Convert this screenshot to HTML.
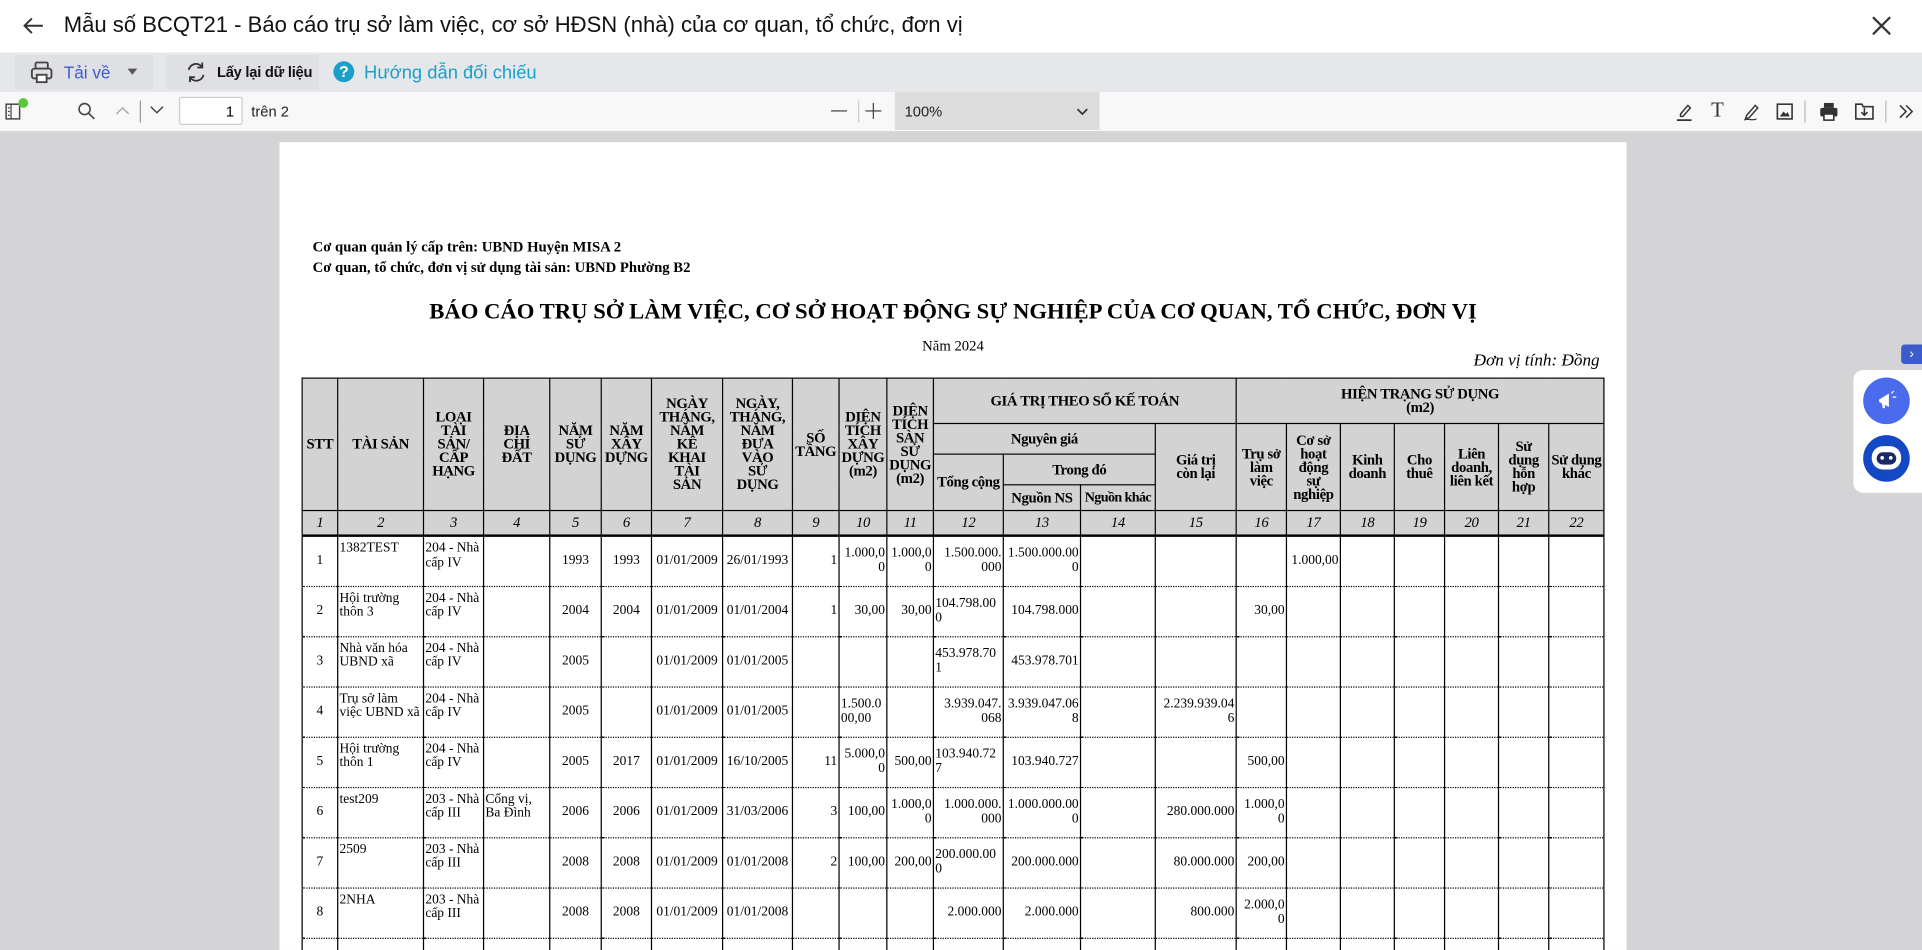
<!DOCTYPE html>
<html><head><meta charset="utf-8">
<style>
html,body{margin:0;padding:0;width:1922px;height:950px;overflow:hidden;background:#fff}
#w{position:absolute;left:0;top:0;width:1568px;height:775px;transform:scale(1.22577);transform-origin:0 0;overflow:hidden;font-family:"Liberation Sans",sans-serif;background:#d4d4d6}
.abs{position:absolute}
#title{left:0;top:0;width:1568px;height:43px;background:#fff}
#tb{left:0;top:43px;width:1568px;height:32px;background:#e6e7ea}
#tb2{left:0;top:75px;width:1568px;height:32px;background:#f8f8f8;border-bottom:1px solid #d0d0d0}
#page{left:228px;top:116px;width:1099px;height:659px;background:#fff;overflow:hidden}
.serif{font-family:"Liberation Serif",serif}
table{border-collapse:collapse;table-layout:fixed;position:absolute;left:18px;top:192px;width:1062px;font-family:"Liberation Serif",serif;font-size:11px}
td{border:1px solid #000;padding:0 1px;line-height:11.5px;overflow:hidden}
thead td{background:#d3d3d3;font-weight:bold;text-align:center;vertical-align:middle;font-size:12px;line-height:11px;letter-spacing:-0.3px}
tr.num td{font-style:italic;font-weight:normal;height:19px;border-bottom:2px solid #000}
tbody td{height:36px;padding-top:4px;border-top:1px dotted #000;border-bottom:1px dotted #000;vertical-align:top;box-sizing:border-box}
tbody tr{height:41px}
tbody td.m{vertical-align:middle;padding-top:0;text-align:center}
tbody td.r{text-align:right;vertical-align:middle;padding-top:0;word-break:break-all}
</style></head><body><div id="w">
<div id="title" class="abs">
 <svg class="abs" style="left:18px;top:13px" width="18" height="16" viewBox="0 0 18 16"><path d="M17 8H2M8 2L2 8l6 6" stroke="#333" stroke-width="1.6" fill="none"/></svg>
 <div class="abs" style="left:52px;top:10px;font-size:18px;color:#111;font-weight:500">Mẫu số BCQT21 - Báo cáo trụ sở làm việc, cơ sở HĐSN (nhà) của cơ quan, tổ chức, đơn vị</div>
 <svg class="abs" style="left:1527px;top:13px" width="16" height="16" viewBox="0 0 16 16"><path d="M1 1L15 15M15 1L1 15" stroke="#333" stroke-width="1.8"/></svg>
</div>
<div id="tb" class="abs">
 <div class="abs" style="left:12px;top:2px;width:113px;height:28px;background:#dfe0e4"></div>
 <svg class="abs" style="left:24px;top:6px" width="20" height="20" viewBox="0 0 20 20"><rect x="5" y="2" width="10" height="5" rx="1" fill="none" stroke="#444" stroke-width="1.5"/><rect x="2" y="7" width="16" height="8" rx="2" fill="none" stroke="#444" stroke-width="1.5"/><rect x="6" y="12" width="8" height="6" fill="#fff" stroke="#444" stroke-width="1.5"/></svg>
 <div class="abs" style="left:52px;top:8px;font-size:14px;color:#3d5ccc">Tải về</div>
 <div class="abs" style="left:104px;top:13px;width:0;height:0;border-left:4px solid transparent;border-right:4px solid transparent;border-top:5px solid #555"></div>
 <div class="abs" style="left:135px;top:2px;width:125px;height:28px;background:#dfe0e4"></div>
 <svg class="abs" style="left:150px;top:7px" width="20" height="18" viewBox="0 0 20 18"><path d="M4 7a6 6 0 0 1 11-2M16 11a6 6 0 0 1-11 2" fill="none" stroke="#333" stroke-width="1.5"/><path d="M15 1v4h-4M5 17v-4h4" fill="none" stroke="#333" stroke-width="1.5"/></svg>
 <div class="abs" style="left:177px;top:9px;font-size:12px;color:#111;font-weight:bold;letter-spacing:-0.2px">Lấy lại dữ liệu</div>
 <div class="abs" style="left:272px;top:7px;width:17px;height:17px;border-radius:50%;background:#1aa0c8;color:#fff;font-size:13px;font-weight:bold;text-align:center;line-height:17px">?</div>
 <div class="abs" style="left:297px;top:8px;font-size:15px;color:#1aa0c8">Hướng dẫn đối chiếu</div>
</div>
<div id="tb2" class="abs">
 <svg class="abs" style="left:4px;top:9px" width="14" height="14" viewBox="0 0 14 14"><rect x="1" y="1" width="11" height="12" fill="none" stroke="#444" stroke-width="1.2"/><path d="M5 1v12M2.5 4h1.5M2.5 7h1.5M2.5 10h1.5" stroke="#444"/></svg>
 <div class="abs" style="left:15px;top:5px;width:8px;height:8px;border-radius:50%;background:#5ac83c"></div>
 <svg class="abs" style="left:63px;top:8px" width="15" height="15" viewBox="0 0 15 15"><circle cx="6" cy="6" r="4.5" fill="none" stroke="#444" stroke-width="1.3"/><path d="M9.5 9.5L14 14" stroke="#444" stroke-width="1.3"/></svg>
 <svg class="abs" style="left:94px;top:10px" width="12" height="10" viewBox="0 0 12 10"><path d="M1 8l5-5 5 5" fill="none" stroke="#aaa" stroke-width="1.2"/></svg>
 <div class="abs" style="left:114px;top:7px;width:1px;height:18px;background:#999"></div>
 <svg class="abs" style="left:122px;top:10px" width="12" height="10" viewBox="0 0 12 10"><path d="M1 2l5 5 5-5" fill="none" stroke="#444" stroke-width="1.2"/></svg>
 <div class="abs" style="left:146px;top:4px;width:52px;height:23px;border:1px solid #ccc;background:#fff;border-radius:2px;font-size:12px;text-align:right;line-height:23px;box-sizing:border-box;padding-right:6px">1</div>
 <div class="abs" style="left:205px;top:9px;font-size:12px;color:#222">trên 2</div>
 <div class="abs" style="left:678px;top:15px;width:13px;height:1.3px;background:#444"></div>
 <div class="abs" style="left:700px;top:7px;width:1px;height:18px;background:#ccc"></div>
 <div class="abs" style="left:706px;top:15px;width:13px;height:1.3px;background:#444"></div>
 <div class="abs" style="left:712px;top:9px;width:1.3px;height:13px;background:#444"></div>
 <div class="abs" style="left:730px;top:0;width:167px;height:31px;background:#dcdcdc"></div>
 <div class="abs" style="left:738px;top:9px;font-size:12px;color:#222">100%</div>
 <svg class="abs" style="left:878px;top:12px" width="10" height="8" viewBox="0 0 10 8"><path d="M1 2l4 4 4-4" fill="none" stroke="#333" stroke-width="1.4"/></svg>
 <svg class="abs" style="left:1366px;top:8px" width="16" height="16" viewBox="0 0 16 16"><path d="M5 10l6-7 2 2-6 7H5z" fill="none" stroke="#333" stroke-width="1.2"/><path d="M2 15h12" stroke="#333" stroke-width="1.5"/></svg>
 <div class="abs serif" style="left:1396px;top:5px;font-size:17px;color:#333">T</div>
 <svg class="abs" style="left:1421px;top:8px" width="16" height="16" viewBox="0 0 16 16"><path d="M4 11l7-8 2 2-7 8-3 1z" fill="none" stroke="#333" stroke-width="1.2"/><path d="M2 15c3-2 5 1 10-1" fill="none" stroke="#333"/></svg>
 <svg class="abs" style="left:1449px;top:9px" width="14" height="14" viewBox="0 0 14 14"><rect x="1" y="1" width="12" height="12" fill="none" stroke="#333" stroke-width="1.3"/><path d="M3 11l3-4 2 2 1.5-1.5L11 11z" fill="#333"/></svg>
 <div class="abs" style="left:1472px;top:7px;width:1px;height:18px;background:#bbb"></div>
 <svg class="abs" style="left:1484px;top:8px" width="16" height="16" viewBox="0 0 16 16"><rect x="4" y="1" width="8" height="4" fill="#333"/><rect x="1" y="5" width="14" height="7" rx="1.5" fill="#333"/><rect x="4" y="10" width="8" height="5" fill="#fff" stroke="#333" stroke-width="1.3"/></svg>
 <svg class="abs" style="left:1513px;top:8px" width="17" height="16" viewBox="0 0 17 16"><path d="M1 2h5l1 2h8v10H1z" fill="none" stroke="#333" stroke-width="1.3"/><path d="M8 5v6M5.5 8.5L8 11l2.5-2.5" fill="none" stroke="#333" stroke-width="1.3"/></svg>
 <div class="abs" style="left:1538px;top:7px;width:1px;height:18px;background:#bbb"></div>
 <svg class="abs" style="left:1548px;top:10px" width="14" height="12" viewBox="0 0 14 12"><path d="M2 1l5 5-5 5M7 1l5 5-5 5" fill="none" stroke="#333" stroke-width="1.2"/></svg>
</div>
<div id="page" class="abs">
 <div class="abs serif" style="left:27px;top:77px;font-size:12px;font-weight:bold;line-height:17px">Cơ quan quản lý cấp trên: UBND Huyện MISA 2<br>Cơ quan, tổ chức, đơn vị sử dụng tài sản: UBND Phường B2</div>
 <div class="abs serif" style="left:0;width:1099px;top:129px;text-align:center;font-size:18.5px;font-weight:bold">BÁO CÁO TRỤ SỞ LÀM VIỆC, CƠ SỞ HOẠT ĐỘNG SỰ NGHIỆP CỦA CƠ QUAN, TỔ CHỨC, ĐƠN VỊ</div>
 <div class="abs serif" style="left:0;width:1099px;top:159px;text-align:center;font-size:12px">Năm 2024</div>
 <div class="abs serif" style="right:22px;top:171px;font-size:14px;font-style:italic">Đơn vị tính: Đồng</div>
 <table>
 <colgroup><col style="width:29px"><col style="width:70px"><col style="width:49px"><col style="width:54px"><col style="width:42px"><col style="width:41px"><col style="width:58px"><col style="width:57px"><col style="width:38px"><col style="width:39px"><col style="width:38px"><col style="width:57px"><col style="width:63px"><col style="width:61px"><col style="width:66px"><col style="width:41px"><col style="width:44px"><col style="width:44px"><col style="width:41px"><col style="width:44px"><col style="width:41px"><col style="width:45px"></colgroup>
 <thead>
 <tr style="height:37px"><td rowspan="4">STT</td><td rowspan="4">TÀI SẢN</td><td rowspan="4">LOẠI<br>TÀI<br>SẢN/<br>CẤP<br>HẠNG</td><td rowspan="4">ĐỊA<br>CHỈ<br>ĐẤT</td><td rowspan="4">NĂM<br>SỬ<br>DỤNG</td><td rowspan="4">NĂM<br>XÂY<br>DỰNG</td><td rowspan="4">NGÀY<br>THÁNG,<br>NĂM<br>KÊ<br>KHAI<br>TÀI<br>SẢN</td><td rowspan="4">NGÀY,<br>THÁNG,<br>NĂM<br>ĐƯA<br>VÀO<br>SỬ<br>DỤNG</td><td rowspan="4">SỐ<br>TẦNG</td><td rowspan="4">DIỆN<br>TÍCH<br>XÂY<br>DỰNG<br>(m2)</td><td rowspan="4">DIỆN<br>TÍCH<br>SÀN<br>SỬ<br>DỤNG<br>(m2)</td><td colspan="4">GIÁ TRỊ THEO SỔ KẾ TOÁN</td><td colspan="7">HIỆN TRẠNG SỬ DỤNG<br>(m2)</td></tr>
 <tr style="height:25px"><td colspan="3">Nguyên giá</td><td rowspan="3">Giá trị<br>còn lại</td><td rowspan="3">Trụ sở<br>làm<br>việc</td><td rowspan="3">Cơ sở<br>hoạt<br>động<br>sự<br>nghiệp</td><td rowspan="3">Kinh<br>doanh</td><td rowspan="3">Cho<br>thuê</td><td rowspan="3">Liên<br>doanh,<br>liên kết</td><td rowspan="3">Sử<br>dụng<br>hỗn<br>hợp</td><td rowspan="3" style="white-space:nowrap">Sử dụng<br>khác</td></tr>
 <tr style="height:25px"><td rowspan="2">Tổng cộng</td><td colspan="2">Trong đó</td></tr>
 <tr style="height:21px"><td>Nguồn NS</td><td style="white-space:nowrap;letter-spacing:-0.5px;font-size:11.5px">Nguồn khác</td></tr>
 <tr class="num"><td>1</td><td>2</td><td>3</td><td>4</td><td>5</td><td>6</td><td>7</td><td>8</td><td>9</td><td>10</td><td>11</td><td>12</td><td>13</td><td>14</td><td>15</td><td>16</td><td>17</td><td>18</td><td>19</td><td>20</td><td>21</td><td>22</td></tr>
 </thead>
 <tbody>
 <tr><td class="m">1</td><td>1382TEST</td><td>204 - Nhà cấp IV</td><td></td><td class="m">1993</td><td class="m">1993</td><td class="m">01/01/2009</td><td class="m">26/01/1993</td><td class="r">1</td><td class="r">1.000,0 0</td><td class="r">1.000,0 0</td><td class="r">1.500.000. 000</td><td class="r">1.500.000.00 0</td><td></td><td></td><td></td><td class="r">1.000,00</td><td></td><td></td><td></td><td></td><td></td></tr>
 <tr><td class="m">2</td><td>Hội trường thôn 3</td><td>204 - Nhà cấp IV</td><td></td><td class="m">2004</td><td class="m">2004</td><td class="m">01/01/2009</td><td class="m">01/01/2004</td><td class="r">1</td><td class="r">30,00</td><td class="r">30,00</td><td class="r" style="text-align:left">104.798.00 0</td><td class="r">104.798.000</td><td></td><td></td><td class="r">30,00</td><td></td><td></td><td></td><td></td><td></td><td></td></tr>
 <tr><td class="m">3</td><td>Nhà văn hóa UBND xã</td><td>204 - Nhà cấp IV</td><td></td><td class="m">2005</td><td></td><td class="m">01/01/2009</td><td class="m">01/01/2005</td><td></td><td></td><td></td><td class="r" style="text-align:left">453.978.70 1</td><td class="r">453.978.701</td><td></td><td></td><td></td><td></td><td></td><td></td><td></td><td></td><td></td></tr>
 <tr><td class="m">4</td><td>Trụ sở làm việc UBND xã</td><td>204 - Nhà cấp IV</td><td></td><td class="m">2005</td><td></td><td class="m">01/01/2009</td><td class="m">01/01/2005</td><td></td><td class="r" style="text-align:left">1.500.0 00,00</td><td></td><td class="r">3.939.047. 068</td><td class="r">3.939.047.06 8</td><td></td><td class="r">2.239.939.04 6</td><td></td><td></td><td></td><td></td><td></td><td></td><td></td></tr>
 <tr><td class="m">5</td><td>Hội trường thôn 1</td><td>204 - Nhà cấp IV</td><td></td><td class="m">2005</td><td class="m">2017</td><td class="m">01/01/2009</td><td class="m">16/10/2005</td><td class="r">11</td><td class="r">5.000,0 0</td><td class="r">500,00</td><td class="r" style="text-align:left">103.940.72 7</td><td class="r">103.940.727</td><td></td><td></td><td class="r">500,00</td><td></td><td></td><td></td><td></td><td></td><td></td></tr>
 <tr><td class="m">6</td><td>test209</td><td>203 - Nhà cấp III</td><td>Cống vị, Ba Đình</td><td class="m">2006</td><td class="m">2006</td><td class="m">01/01/2009</td><td class="m">31/03/2006</td><td class="r">3</td><td class="r">100,00</td><td class="r">1.000,0 0</td><td class="r">1.000.000. 000</td><td class="r">1.000.000.00 0</td><td></td><td class="r">280.000.000</td><td class="r">1.000,0 0</td><td></td><td></td><td></td><td></td><td></td><td></td></tr>
 <tr><td class="m">7</td><td>2509</td><td>203 - Nhà cấp III</td><td></td><td class="m">2008</td><td class="m">2008</td><td class="m">01/01/2009</td><td class="m">01/01/2008</td><td class="r">2</td><td class="r">100,00</td><td class="r">200,00</td><td class="r" style="text-align:left">200.000.00 0</td><td class="r">200.000.000</td><td></td><td class="r">80.000.000</td><td class="r">200,00</td><td></td><td></td><td></td><td></td><td></td><td></td></tr>
 <tr><td class="m">8</td><td>2NHA</td><td>203 - Nhà cấp III</td><td></td><td class="m">2008</td><td class="m">2008</td><td class="m">01/01/2009</td><td class="m">01/01/2008</td><td></td><td></td><td></td><td class="r">2.000.000</td><td class="r">2.000.000</td><td></td><td class="r">800.000</td><td class="r">2.000,0 0</td><td></td><td></td><td></td><td></td><td></td><td></td></tr>
 <tr><td class="m"></td><td></td><td></td><td></td><td></td><td></td><td></td><td></td><td></td><td></td><td></td><td></td><td></td><td></td><td></td><td></td><td></td><td></td><td></td><td></td><td></td><td></td></tr>
 </tbody></table>
</div>
<div class="abs" style="left:1551px;top:281px;width:17px;height:16px;background:#3d5ccc;border-radius:3px 0 0 3px;color:#fff;font-size:11px;text-align:center;line-height:16px">›</div>
<div class="abs" style="left:1512px;top:302px;width:56px;height:100px;background:#fff;border-radius:8px 0 0 8px"></div>
<div class="abs" style="left:1520px;top:308px;width:38px;height:38px;border-radius:50%;background:#4b6bef"></div>
<svg class="abs" style="left:1530px;top:318px" width="18" height="18" viewBox="0 0 18 18"><path d="M3 8l8-5v11L3 10z" fill="#fff"/><path d="M5 10l1 5h2l-1-5" fill="#fff"/><path d="M13 3l2-2M14 6h3" stroke="#fff"/></svg>
<div class="abs" style="left:1520px;top:355px;width:38px;height:38px;border-radius:50%;background:#1548c4"></div>
<div class="abs" style="left:1527px;top:364px;width:24px;height:19px;border-radius:9px;background:#fff"></div>
<div class="abs" style="left:1531px;top:369px;width:16px;height:10px;border-radius:5px;background:#1a2a66"></div>
<div class="abs" style="left:1534px;top:372px;width:3px;height:3px;border-radius:50%;background:#fff"></div>
<div class="abs" style="left:1541px;top:372px;width:3px;height:3px;border-radius:50%;background:#fff"></div>
</div></body></html>
